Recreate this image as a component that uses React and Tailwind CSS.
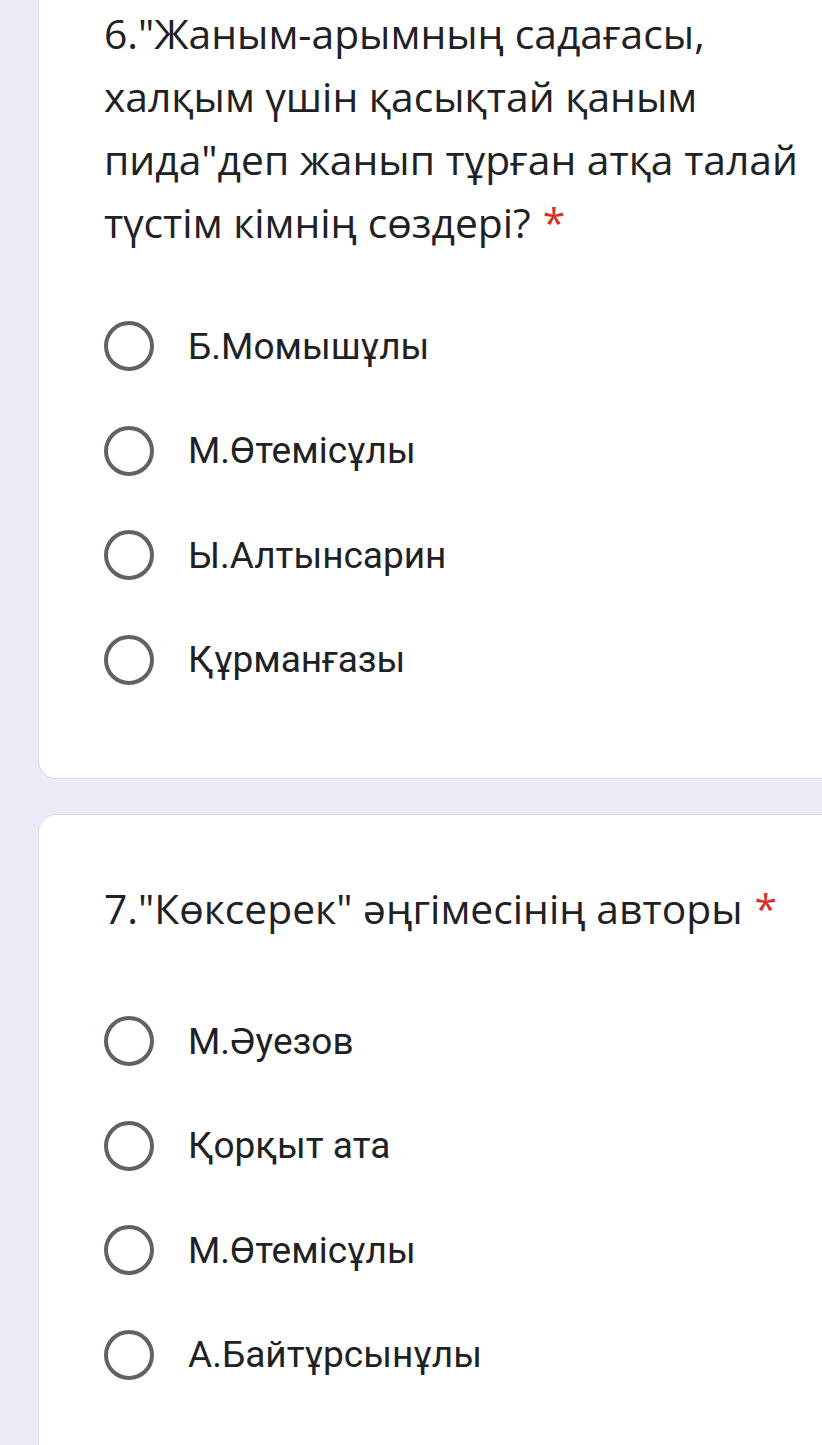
import React from 'react';

const questions = [
  {
    lines: ['6."Жаным-арымның садағасы,', 'халқым үшін қасықтай қаным', 'пида"деп жанып тұрған атқа талай', 'түстім кімнің сөздері?'],
    options: ['Б.Момышұлы', 'М.Өтемісұлы', 'Ы.Алтынсарин', 'Құрманғазы'],
  },
  {
    lines: ['7."Көксерек" әңгімесінің авторы'],
    options: ['М.Әуезов', 'Қорқыт ата', 'М.Өтемісұлы', 'А.Байтұрсынұлы'],
  },
];

function Option({ label }) {
  return (
    <div className="flex items-center h-[104.5px]">
      <span className="w-[50px] h-[50px] rounded-full border-[4.5px] border-[#5f6368] shrink-0" />
      <span className="ml-[34px] text-[37px] text-[#202124] font-['Roboto',sans-serif]">{label}</span>
    </div>
  );
}

function Title({ lines }) {
  return (
    <h2 className="text-[40.8px] leading-[63px] text-[#202124] font-['Open_Sans',sans-serif] whitespace-nowrap">
      {lines.map((l, i) => (
        <div key={i}>
          {l}
          {i === lines.length - 1 && <span className="text-[#d93025] ml-[12px]">*</span>}
        </div>
      ))}
    </h2>
  );
}

export default function App() {
  const [q1, q2] = questions;
  return (
    <div className="bg-[#ede9f6] h-[1445px] overflow-hidden pl-[38px]">
      {/* question 6 card, top cut off */}
      <div className="w-[820px] bg-white border border-t-0 border-[#dadce0] rounded-bl-[18px] pl-[65px] pt-[2px] pb-[66px]">
        <Title lines={q1.lines} />
        <div className="mt-[40px]">
          {q1.options.map((o) => (
            <Option key={o} label={o} />
          ))}
        </div>
      </div>

      {/* question 7 card */}
      <div className="mt-[35px] w-[820px] bg-white border border-[#dadce0] rounded-tl-[18px] pl-[65px] pt-[62px] pb-[40px]">
        <Title lines={q2.lines} />
        <div className="mt-[49px]">
          {q2.options.map((o, i) => (
            <Option key={i} label={o} />
          ))}
        </div>
      </div>
    </div>
  );
}
